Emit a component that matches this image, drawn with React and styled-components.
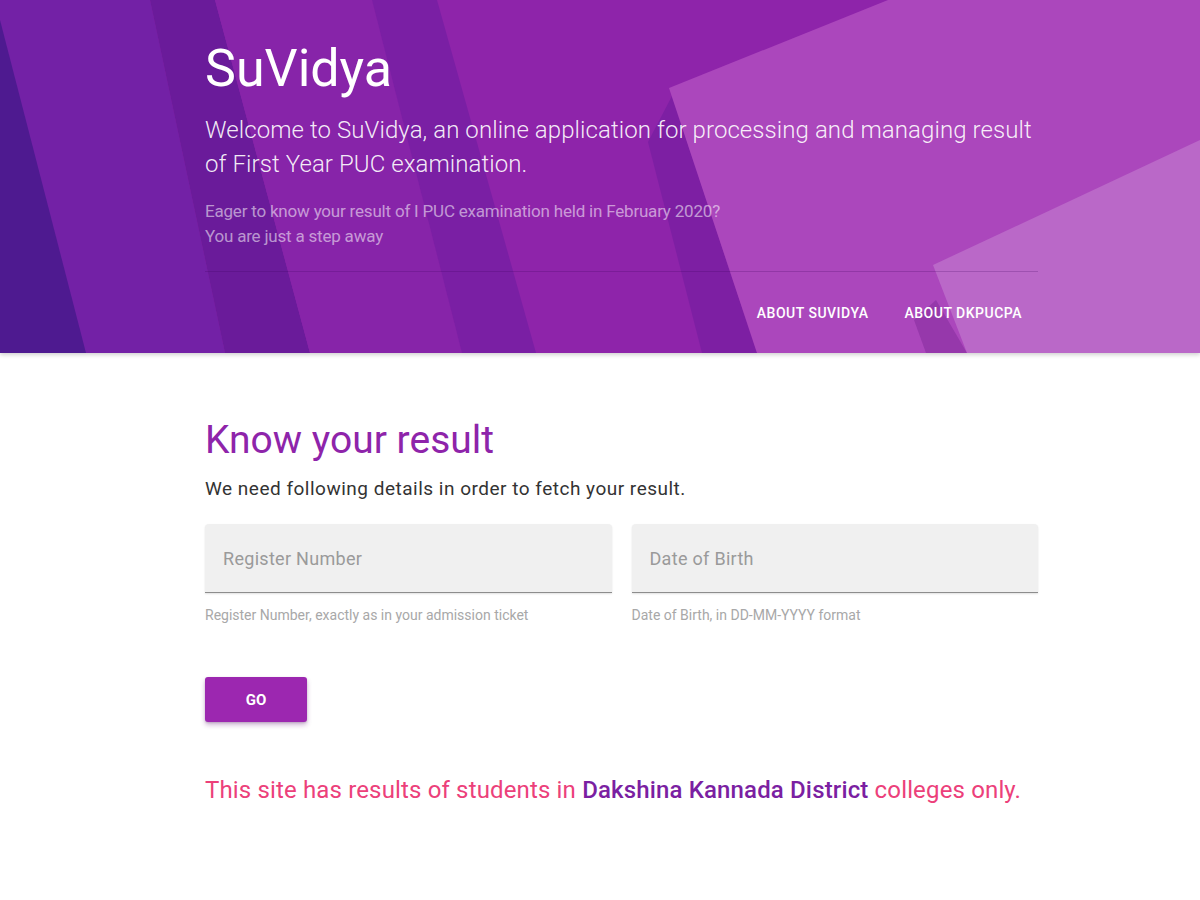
import React from "react";
import styled, { createGlobalStyle } from "styled-components";

const GlobalStyle = createGlobalStyle`
  body {
    margin: 0;
    background: #fff;
    font-family: Roboto, "Noto Sans", "Liberation Sans", sans-serif;
    -webkit-font-smoothing: antialiased;
  }
`;

const Header = styled.header`
  position: relative;
  overflow: hidden;
  height: 353px;
  background: #8e24aa;
  box-shadow: 0 2px 4px rgba(0, 0, 0, 0.18);
`;

const HeaderArt = styled.svg`
  position: absolute;
  top: 0;
  left: 0;
  width: 100%;
  height: 100%;
`;

const Container = styled.div`
  position: relative;
  width: 833px;
  margin-left: 205px;
`;

const HeaderInner = styled(Container)`
  padding-top: 38px;
`;

const Title = styled.h1`
  margin: 0;
  color: #fff;
  font-size: 52px;
  line-height: 62px;
  font-weight: 400;
`;

const Lead = styled.p`
  margin: 13px 0 0;
  color: rgba(255, 255, 255, 0.92);
  font-size: 24px;
  line-height: 34px;
  font-weight: 300;
  letter-spacing: 0.08px;
`;

const Tagline = styled.p`
  margin: 18px 0 0;
  color: rgba(255, 255, 255, 0.55);
  font-size: 17px;
  line-height: 25px;
  letter-spacing: -0.2px;
`;

const Divider = styled.hr`
  margin: 22px 0 0;
  border: 0;
  height: 1px;
  background: rgba(60, 0, 90, 0.22);
`;

const Nav = styled.nav`
  display: flex;
  justify-content: flex-end;
  gap: 4px;
  padding-top: 23px;
`;

const NavLink = styled.a`
  display: inline-flex;
  align-items: center;
  height: 36px;
  padding: 0 16px;
  color: #fff;
  font-size: 14px;
  font-weight: 500;
  text-transform: uppercase;
  text-decoration: none;
  letter-spacing: 0.5px;
  cursor: pointer;
`;

const Main = styled(Container)`
  padding-top: 64px;
`;

const Heading = styled.h2`
  margin: 0;
  color: #8e24aa;
  font-size: 39px;
  line-height: 46px;
  font-weight: 400;
`;

const Intro = styled.p`
  margin: 12px 0 0;
  color: #333;
  font-size: 19px;
  line-height: 28px;
  letter-spacing: 0.5px;
`;

const Fields = styled.div`
  display: grid;
  grid-template-columns: 1fr 1fr;
  gap: 20px;
  margin-top: 21px;
`;

const Field = styled.div`
  display: flex;
  flex-direction: column;
`;

const Input = styled.input`
  box-sizing: border-box;
  width: 100%;
  height: 69px;
  padding: 0 18px;
  border: 0;
  border-bottom: 1px solid #8d8d8d;
  border-radius: 4px 4px 0 0;
  background: #f0f0f0;
  box-shadow: 0 1px 2px rgba(0, 0, 0, 0.12);
  font-family: inherit;
  font-size: 18px;
  letter-spacing: 0.3px;
  color: #333;
  outline: none;

  &::placeholder {
    color: #9a9a9a;
  }
`;

const Helper = styled.span`
  margin-top: 14px;
  color: #a8a8a8;
  font-size: 14px;
  line-height: 16px;
`;

const GoButton = styled.button`
  display: block;
  width: 102px;
  height: 45px;
  margin-top: 54px;
  border: 0;
  border-radius: 3px;
  background: #9c27b0;
  color: #fff;
  font-family: inherit;
  font-size: 15px;
  font-weight: 700;
  box-shadow: 0 3px 5px rgba(100, 20, 120, 0.3), 0 1px 2px rgba(0, 0, 0, 0.15);
  cursor: pointer;
`;

const Notice = styled.p`
  margin: 53px 0 0;
  color: #ec407a;
  font-size: 24px;
  line-height: 30px;
  letter-spacing: 0.15px;
`;

const Highlight = styled.strong`
  color: #7b1fa2;
  font-weight: 500;
`;

function Backdrop() {
  return (
    <HeaderArt viewBox="0 0 1200 353" preserveAspectRatio="none">
      <polygon points="0,0 150,0 225,353 0,353" fill="#7321a6" />
      <polygon points="150,0 215,0 310,353 225,353" fill="#6a1b9a" />
      <polygon points="215,0 372,0 462,353 310,353" fill="#8724a9" />
      <polygon points="0,20 86,353 0,353" fill="#4e1a90" />
      <polygon points="372,0 437,0 536,353 462,353" fill="#7a1fa4" />
      <polygon points="648,142 672,96 757,353 702,353" fill="#7d1fa3" />
      <polygon points="669,88 888,0 1200,0 1200,353 757,353" fill="#ab47bc" />
      <polygon points="914,320 936,300 967,353 926,353" fill="#9638ab" />
      <polygon points="933,265 1200,140 1200,353 967,353" fill="#ba68c8" />
    </HeaderArt>
  );
}

export default function App() {
  return (
    <>
      <GlobalStyle />
      <Header>
        <Backdrop />
        <HeaderInner>
          <Title>SuVidya</Title>
          <Lead>
            Welcome to SuVidya, an online application for processing and managing result
            <br />
            of First Year PUC examination.
          </Lead>
          <Tagline>
            Eager to know your result of I PUC examination held in February 2020?
            <br />
            You are just a step away
          </Tagline>
          <Divider />
          <Nav>
            <NavLink>About SuVidya</NavLink>
            <NavLink>About DKPUCPA</NavLink>
          </Nav>
        </HeaderInner>
      </Header>

      <Main>
        <Heading>Know your result</Heading>
        <Intro>We need following details in order to fetch your result.</Intro>
        <Fields>
          <Field>
            <Input placeholder="Register Number" />
            <Helper>Register Number, exactly as in your admission ticket</Helper>
          </Field>
          <Field>
            <Input placeholder="Date of Birth" />
            <Helper>Date of Birth, in DD-MM-YYYY format</Helper>
          </Field>
        </Fields>
        <GoButton>GO</GoButton>
        <Notice>
          This site has results of students in <Highlight>Dakshina Kannada District</Highlight> colleges only.
        </Notice>
      </Main>
    </>
  );
}
